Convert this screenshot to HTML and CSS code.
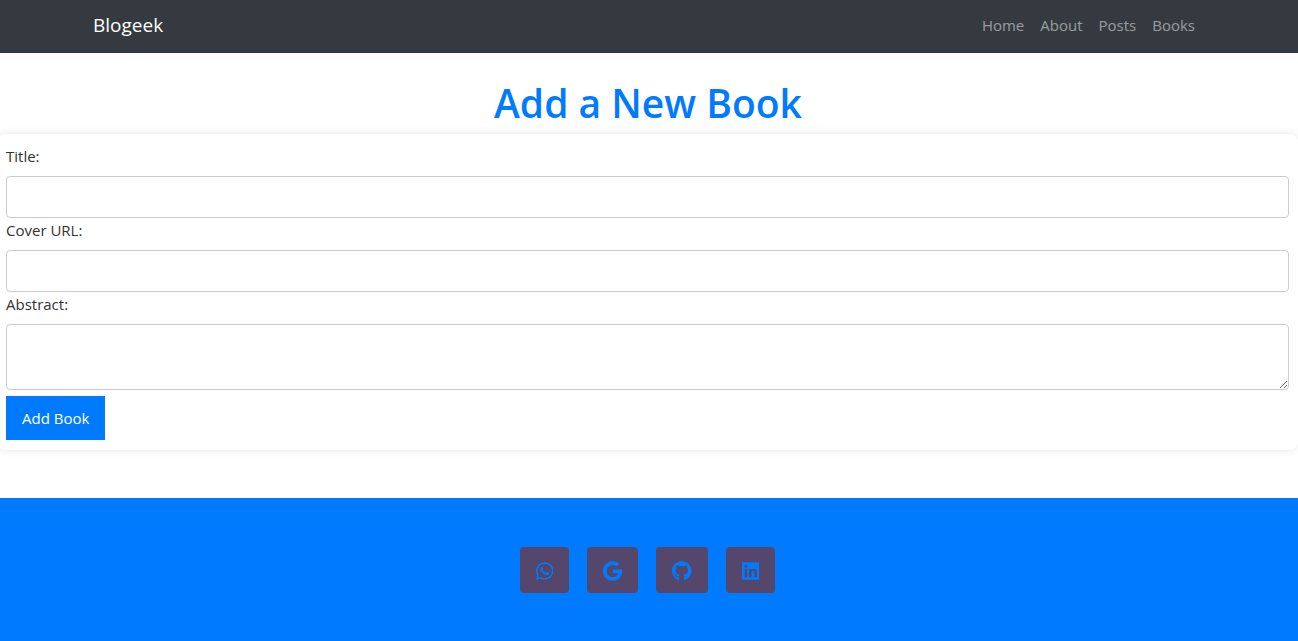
FILE: index.html
```html
<!DOCTYPE html>
<html lang="en">
<head>
<meta charset="utf-8">
<title>Blogeek</title>
<link rel="stylesheet" href="styles.css">
</head>
<body>
<header class="navbar">
  <div class="container">
    <a class="brand" href="#">Blogeek</a>
    <nav class="nav-links">
      <a href="#">Home</a>
      <a href="#">About</a>
      <a href="#">Posts</a>
      <a href="#">Books</a>
    </nav>
  </div>
</header>
<main>
  <h1 class="title">Add a New Book</h1>
  <form class="book-form">
    <label for="title">Title:</label>
    <input class="field" id="title" type="text">
    <label for="cover">Cover URL:</label>
    <input class="field" id="cover" type="text">
    <label for="abstract">Abstract:</label>
    <textarea class="field field-area" id="abstract"></textarea>
    <button class="submit" type="submit">Add Book</button>
  </form>
</main>
<footer class="footer">
  <a class="social" href="#" aria-label="WhatsApp"><svg class="icon" viewBox="0 0 448 512"><path d="M380.9 97.1C339 55.1 283.2 32 223.9 32c-122.4 0-222 99.6-222 222 0 39.1 10.2 77.3 29.6 111L0 480l117.7-30.9c32.4 17.7 68.9 27 106.1 27h.1c122.3 0 224.1-99.6 224.1-222 0-59.3-25.2-115-67.1-157zm-157 341.6c-33.2 0-65.7-8.9-94-25.7l-6.7-4-69.8 18.3L72 359.2l-4.4-7c-18.5-29.4-28.2-63.3-28.2-98.2 0-101.7 82.8-184.5 184.6-184.5 49.3 0 95.6 19.2 130.4 54.1 34.8 34.9 56.2 81.2 56.1 130.5 0 101.8-84.9 184.6-186.6 184.6zm101.2-138.2c-5.5-2.8-32.8-16.2-37.9-18-5.1-1.9-8.8-2.8-12.5 2.8-3.7 5.6-14.3 18-17.6 21.8-3.2 3.7-6.5 4.2-12 1.4-32.6-16.3-54-29.1-75.5-66-5.7-9.8 5.7-9.1 16.3-30.3 1.8-3.7.9-6.9-.5-9.7-1.4-2.8-12.5-30.1-17.1-41.2-4.5-10.8-9.1-9.3-12.5-9.5-3.2-.2-6.9-.2-10.6-.2-3.7 0-9.7 1.4-14.8 6.9-5.1 5.6-19.4 19-19.4 46.3 0 27.3 19.9 53.7 22.6 57.4 2.8 3.7 39.1 59.7 94.8 83.8 35.2 15.2 49 16.5 66.6 13.9 10.7-1.6 32.8-13.4 37.4-26.4 4.6-13 4.6-24.1 3.2-26.4-1.3-2.5-5-3.9-10.5-6.6z"/></svg></a>
  <a class="social" href="#" aria-label="Google"><svg class="icon" viewBox="0 0 488 512"><path d="M488 261.8C488 403.3 391.1 504 248 504 110.8 504 0 393.2 0 256S110.8 8 248 8c66.8 0 123 24.5 166.3 64.9l-67.5 64.9C258.5 52.6 94.3 116.6 94.3 256c0 86.5 69.1 156.6 153.7 156.6 98.2 0 135-70.4 140.8-106.9H248v-85.3h236.1c2.3 12.7 3.9 24.9 3.9 41.4z"/></svg></a>
  <a class="social" href="#" aria-label="GitHub"><svg class="icon" viewBox="0 0 496 512"><path d="M244.8 8C106.1 8 0 113.3 0 252c0 110.9 69.8 205.8 169.5 239.2 12.8 2.3 17.3-5.6 17.3-12.1 0-6.2-.3-40.4-.3-61.4 0 0-70 15-84.7-29.8 0 0-11.4-29.1-27.8-36.6 0 0-22.9-15.7 1.6-15.4 0 0 24.9 2 38.6 25.8 21.9 38.6 58.6 27.5 72.9 20.9 2.3-16 8.8-27.1 16-33.7-55.9-6.2-112.3-14.3-112.3-110.5 0-27.5 7.6-41.3 23.6-58.9-2.6-6.5-11.1-33.3 2.6-67.9 20.9-6.5 69 27 69 27 20-5.6 41.5-8.5 62.8-8.5s42.8 2.9 62.8 8.5c0 0 48.1-33.6 69-27 13.7 34.7 5.2 61.4 2.6 67.9 16 17.7 25.8 31.5 25.8 58.9 0 96.5-58.9 104.2-114.8 110.5 9.2 7.9 17 22.9 17 46.4 0 33.7-.3 75.4-.3 83.6 0 6.5 4.6 14.4 17.3 12.1C428.2 457.8 496 362.9 496 252 496 113.3 383.5 8 244.8 8z"/></svg></a>
  <a class="social" href="#" aria-label="LinkedIn"><svg class="icon" viewBox="0 0 448 512"><path d="M416 32H31.9C14.3 32 0 46.5 0 64.3v383.4C0 465.5 14.3 480 31.9 480H416c17.6 0 32-14.5 32-32.3V64.3c0-17.8-14.4-32.3-32-32.3zM135.4 416H69V202.2h66.5V416zm-33.2-243c-21.3 0-38.5-17.3-38.5-38.5S80.9 96 102.2 96c21.2 0 38.5 17.3 38.5 38.5 0 21.3-17.2 38.5-38.5 38.5zm282.1 243h-66.4V312c0-24.8-.5-56.7-34.5-56.7-34.6 0-39.9 27-39.9 54.9V416h-66.4V202.2h63.7v29.2h.9c8.9-16.8 30.6-34.5 62.9-34.5 67.2 0 79.7 44.3 79.7 101.9V416z"/></svg></a>
</footer>
</body>
</html>
```
FILE: styles.css
```css
* {
  box-sizing: border-box;
}

body {
  margin: 0;
  overflow-x: hidden;
  background: #fff;
  color: #212529;
  font-family: "Segoe UI", "Open Sans", "Noto Sans", sans-serif;
  font-size: 15px;
  line-height: 24px;
}

.navbar {
  padding: 7px 2px 10px 0;
  background: #343a40;
}

.container {
  display: flex;
  align-items: center;
  justify-content: space-between;
  max-width: 1140px;
  min-height: 36px;
  margin: 0 auto;
  padding: 0 15px;
}

.brand {
  color: #fff;
  font-size: 19px;
  text-decoration: none;
}

.nav-links {
  display: flex;
}

.nav-links a {
  padding: 0 8px;
  color: rgba(255, 255, 255, 0.5);
  text-decoration: none;
}

.title {
  margin: 0;
  padding: 26px 2px 7px 0;
  color: #007bff;
  font-size: 39px;
  font-weight: 600;
  line-height: 48px;
  text-align: center;
}

.book-form {
  display: flex;
  flex-direction: column;
  margin: 0 0 48px -3px;
  padding: 10px 9px;
  border-radius: 8px;
  background: #fff;
  box-shadow: 0 0 10px rgba(0, 0, 0, 0.1);
}

.book-form label {
  margin-bottom: 8px;
  color: #333;
}

.field {
  display: block;
  width: 100%;
  height: 42px;
  padding: 8px;
  border: 1px solid #ccc;
  border-radius: 4px;
  background: #fff;
  color: inherit;
  font: inherit;
}

.field-area {
  height: 66px;
  resize: vertical;
}

.submit {
  align-self: flex-start;
  margin-top: 6px;
  padding: 10px 16px;
  border: 0;
  background: #007bff;
  color: #fff;
  font: inherit;
}

.footer {
  display: flex;
  justify-content: center;
  gap: 18px;
  padding: 49px 3px 48px 0;
  background: #007bff;
}

.social {
  display: flex;
  align-items: center;
  height: 46px;
  padding: 1px 16px 0;
  border-radius: 4px;
  background: #54476b;
}

.icon {
  display: block;
  height: 20px;
  fill: #007bff;
}
```
